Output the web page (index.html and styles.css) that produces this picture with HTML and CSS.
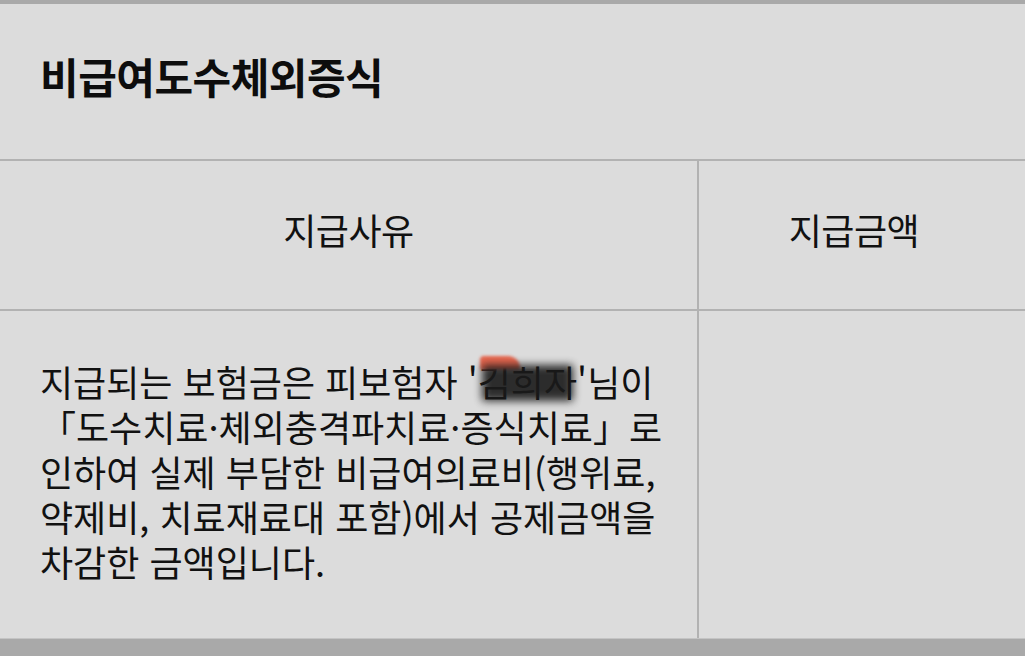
FILE: index.html
```html
<!DOCTYPE html>
<html lang="ko">
<head>
<meta charset="utf-8">
<link rel="stylesheet" href="styles.css">
</head>
<body>
<div class="page">
  <div class="topbar"></div>
  <section class="title-section">
    <h1 class="title">비급여도수체외증식</h1>
  </section>
  <div class="table">
    <div class="row head-row">
      <div class="cell c1">지급사유</div>
      <div class="cell c2">지급금액</div>
    </div>
    <div class="row body-row">
      <div class="cell c1 desc">
        <p>지급되는 보험금은 피보험자 '<span class="redact">김희자</span>'님이<br>「도수치료·체외충격파치료·증식치료」로<br>인하여 실제 부담한 비급여의료비(행위료,<br>약제비, 치료재료대 포함)에서 공제금액을<br>차감한 금액입니다.</p>
      </div>
      <div class="cell c2"></div>
    </div>
  </div>
  <div class="bottombar"></div>
</div>
</body>
</html>
```

FILE: styles.css
```css
* { box-sizing: border-box; margin: 0; padding: 0; }
html, body { width: 1025px; height: 656px; overflow: hidden; }
body {
  background: #dcdcdc;
  font-family: "Noto Sans CJK KR", "Noto Sans", sans-serif;
  color: #111;
}
.page { display: flex; flex-direction: column; height: 656px; }
.topbar { height: 4px; background: #a9a9a9; flex: none; }
.title-section {
  height: 157px;
  display: flex;
  align-items: center;
  padding-left: 40px;
  border-bottom: 2px solid #b2b2b2;
  flex: none;
}
.title {
  font-size: 42px;
  font-weight: 700;
  letter-spacing: -0.5px;
  color: #0d0d0d;
  margin-top: -12px;
}
.table { flex: 1; display: flex; flex-direction: column; }
.row { display: flex; }
.head-row { height: 150px; border-bottom: 2px solid #b2b2b2; }
.body-row { flex: 1; }
.cell { display: flex; }
.c1 { width: 699px; border-right: 2px solid #b2b2b2; }
.c2 { flex: 1; }
.head-row .cell {
  align-items: center;
  justify-content: center;
  font-size: 36px;
  font-weight: 400;
  letter-spacing: -0.5px;
  padding-bottom: 12px;
}
.head-row .c2 { padding-right: 16px; }
.desc {
  padding: 48px 0 0 40px;
  font-size: 36px;
  line-height: 45px;
  letter-spacing: 0;
  white-space: nowrap;
}
.redact { position: relative; }
.redact::before {
  content: "";
  position: absolute;
  left: 2px; top: 1px;
  width: 40px; height: 14px;
  background: #e8674f;
  border-radius: 4px 12px 2px 2px;
  filter: blur(1.5px);
}
.redact::after {
  content: "";
  position: absolute;
  left: 4px; right: 4px; top: 10px; bottom: 6px;
  background: #1a1a1a;
  filter: blur(4px);
  opacity: 0.9;
}
.bottombar { height: 18px; background: #a9a9a9; flex: none; border-top: 1px solid #c4c4c4; }
```
